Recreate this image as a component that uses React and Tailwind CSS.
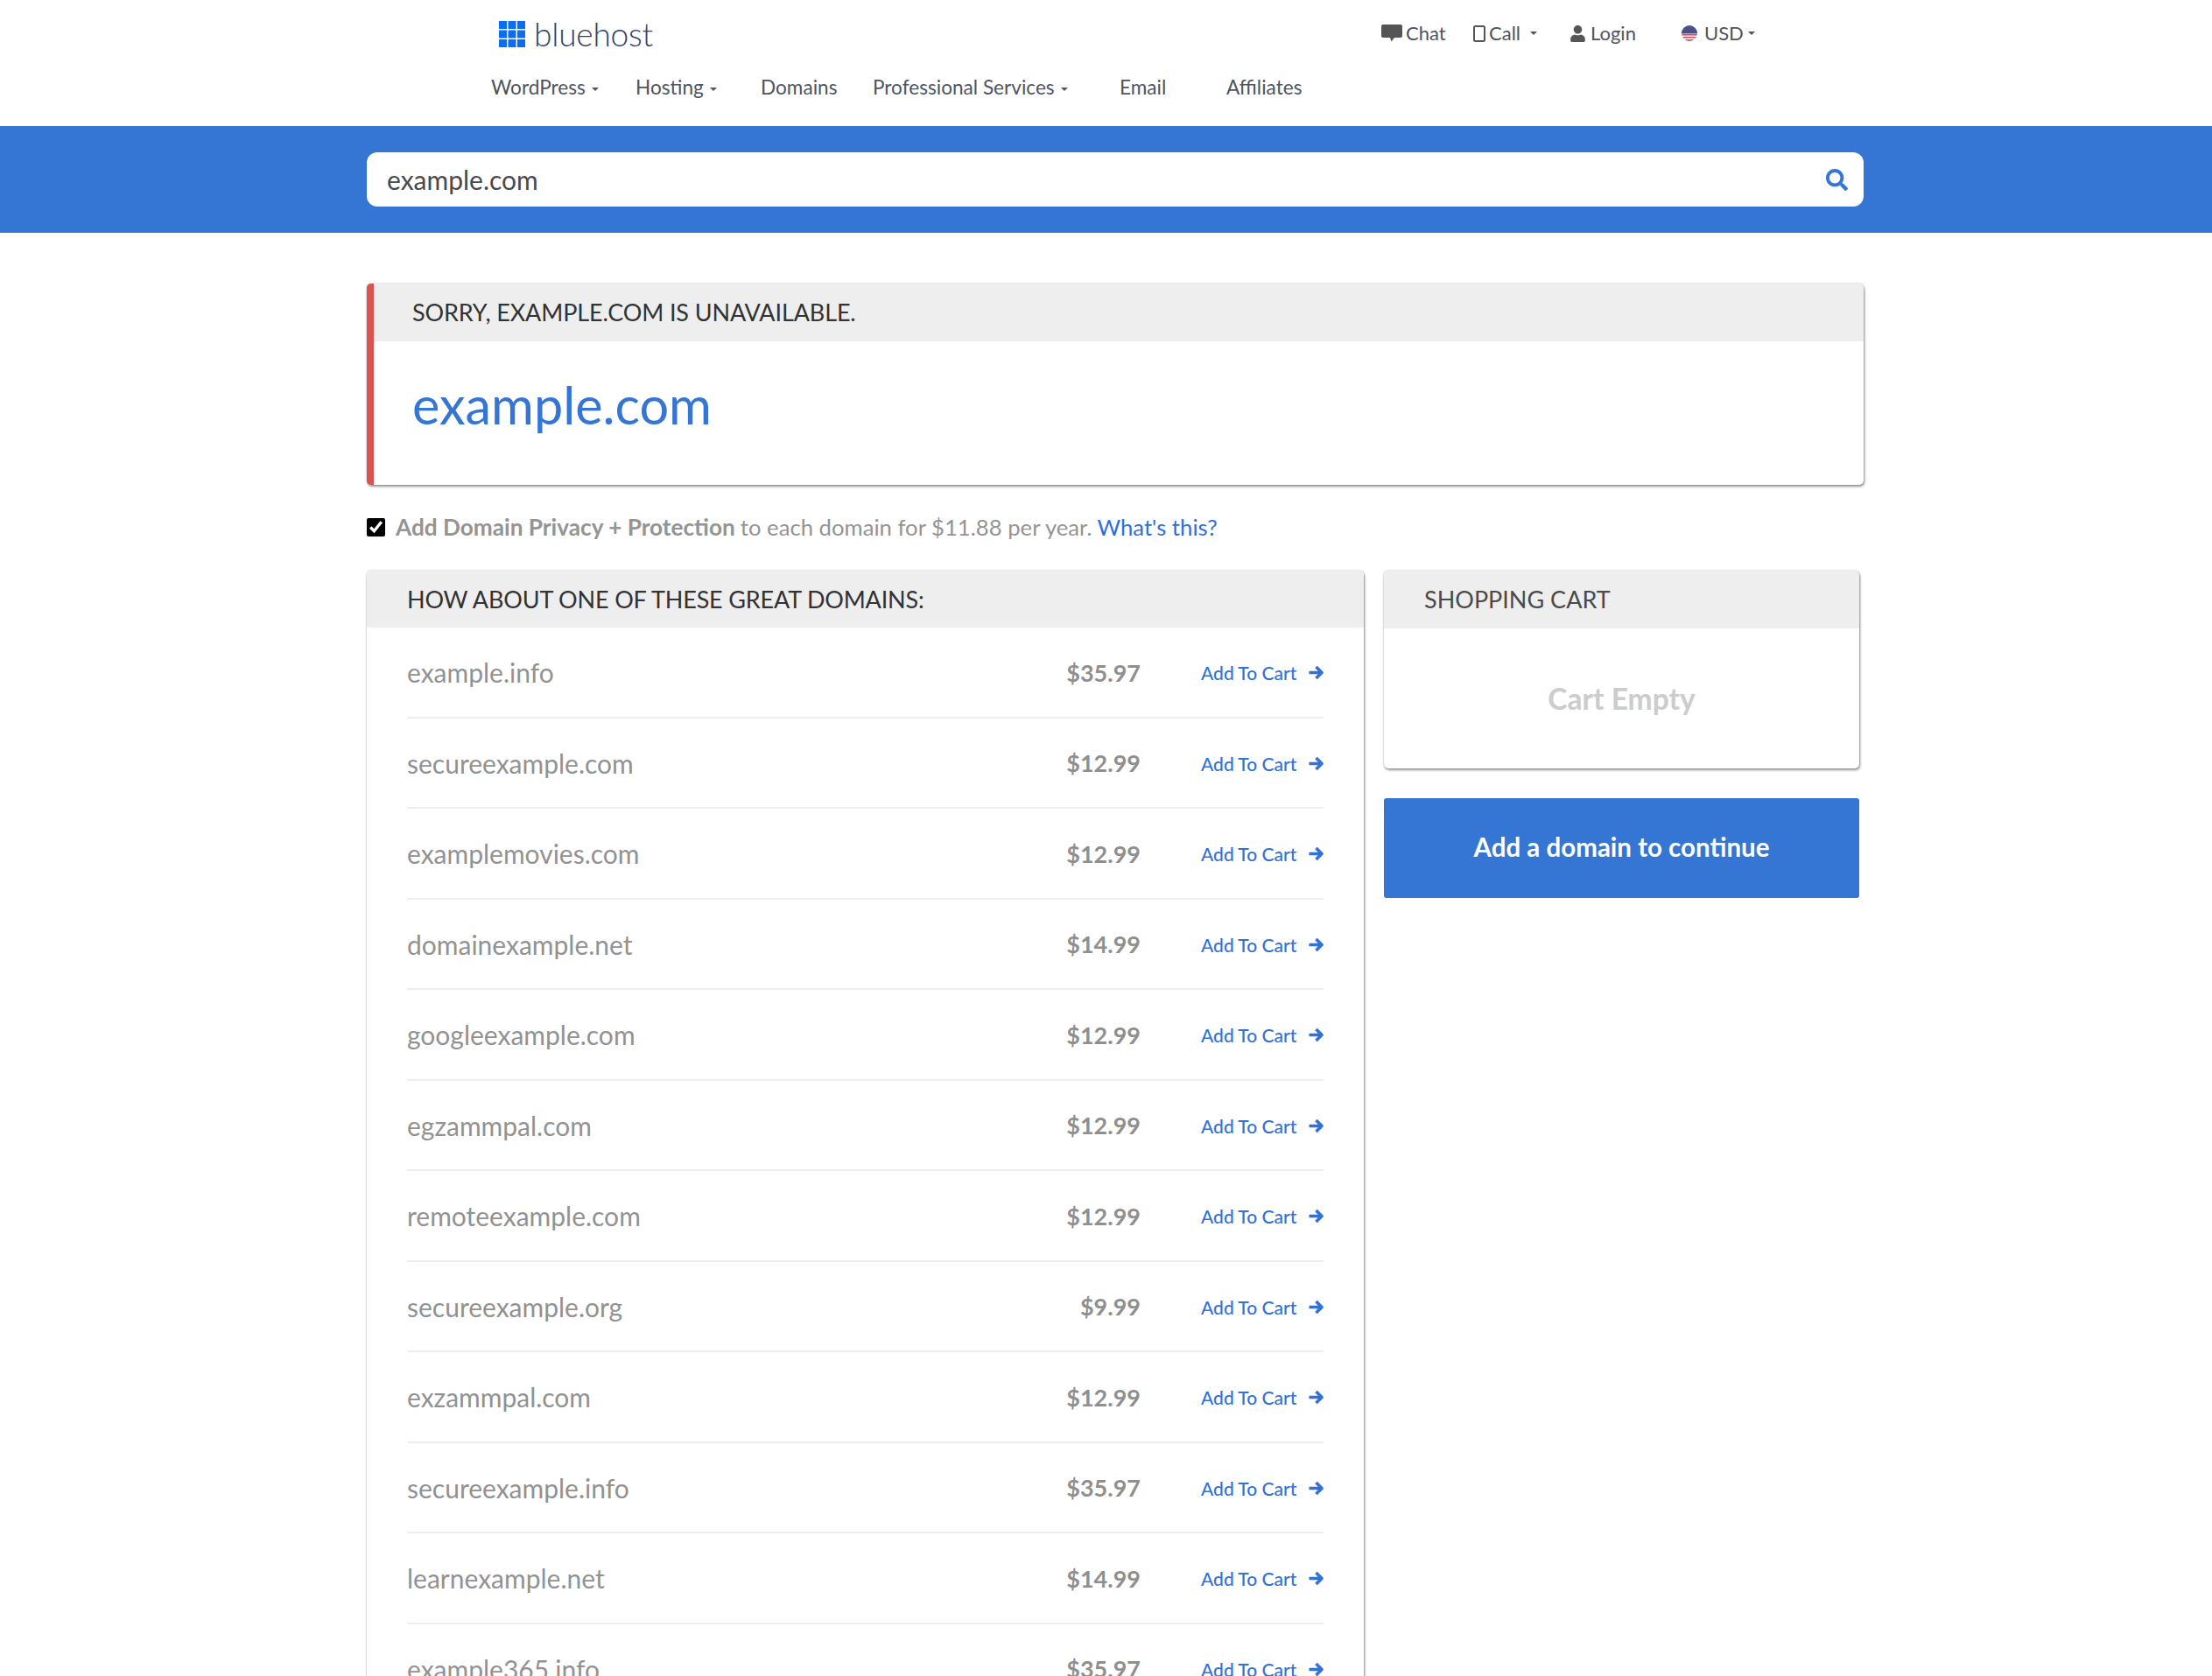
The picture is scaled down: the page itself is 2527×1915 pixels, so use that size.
import React from "react";
import { FaSearch, FaUser } from "react-icons/fa";

const rows = [
  ["example.info", "$35.97"],
  ["secureexample.com", "$12.99"],
  ["examplemovies.com", "$12.99"],
  ["domainexample.net", "$14.99"],
  ["googleexample.com", "$12.99"],
  ["egzammpal.com", "$12.99"],
  ["remoteexample.com", "$12.99"],
  ["secureexample.org", "$9.99"],
  ["exzammpal.com", "$12.99"],
  ["secureexample.info", "$35.97"],
  ["learnexample.net", "$14.99"],
  ["example365.info", "$35.97"],
];

function Caret({ gap = "ml-[7px]" }) {
  return <span className={`${gap} inline-block border-x-[4px] border-t-[4px] border-x-transparent border-t-[#555] align-middle`} />;
}

function Logo() {
  return (
    <svg width="30" height="30" viewBox="0 0 30 30" className="shrink-0">
      {[0, 1, 2].flatMap((r) =>
        [0, 1, 2].map((c) => <rect key={r + "-" + c} x={c * 10.5} y={r * 10.5} width="9" height="9" fill="#0a6ef5" />)
      )}
    </svg>
  );
}

function Flag() {
  return (
    <svg width="18" height="18" viewBox="0 0 18 18" className="shrink-0">
      <defs>
        <clipPath id="flagclip"><circle cx="9" cy="9" r="9" /></clipPath>
      </defs>
      <g clipPath="url(#flagclip)">
        <rect width="18" height="18" fill="#fff" />
        <rect y="10" width="18" height="1.6" fill="#d9505c" />
        <rect y="13" width="18" height="1.6" fill="#d9505c" />
        <rect y="16" width="18" height="2" fill="#d9505c" />
        <rect width="18" height="9.5" fill="#4b4f8a" />
      </g>
    </svg>
  );
}

function ChatIcon() {
  return (
    <svg width="24" height="20" viewBox="0 0 24 20" className="shrink-0">
      <path d="M2 0H22A2 2 0 0 1 24 2V13A2 2 0 0 1 22 15H15L11.5 19.5L10 15H2A2 2 0 0 1 0 13V2A2 2 0 0 1 2 0Z" fill="#555" />
    </svg>
  );
}

function PhoneIcon() {
  return (
    <svg width="14" height="19" viewBox="0 0 14 19" className="shrink-0">
      <rect x="1" y="1" width="12" height="17" rx="1.5" fill="#fff" stroke="#555" strokeWidth="2" />
    </svg>
  );
}

function Arrow() {
  return (
    <svg width="17" height="17" viewBox="0 0 17 17" className="shrink-0">
      <path d="M0.5 8.5H14M8.5 2L15 8.5L8.5 15" fill="none" stroke="#3272d6" strokeWidth="3.6" strokeLinejoin="round" />
    </svg>
  );
}

const shadow = "shadow-[1px_2px_3px_rgba(0,0,0,0.4),0_0_2px_rgba(0,0,0,0.3)]";

export default function App() {
  return (
    <div className="relative h-[1915px] overflow-hidden bg-white font-['Lato',sans-serif]">
      <header className="h-[144px] bg-white text-[#4d5560]">
        <div className="flex h-[78px] items-start">
          <div className="ml-[570px] mt-[24px] flex items-center gap-[10px]">
            <Logo />
            <span className="text-[37px] font-light leading-[30px] tracking-[-0.2px] text-[#2f4266]">bluehost</span>
          </div>
          <div className="ml-[832px] mt-[26px] flex items-center text-[22px] leading-[24px]">
            <span className="flex w-[105px] items-center gap-[4px]"><ChatIcon />Chat</span>
            <span className="flex w-[110px] items-center gap-[4px]"><PhoneIcon />Call<Caret /></span>
            <span className="flex w-[128px] items-center gap-[5px]"><FaUser className="text-[19px] text-[#555]" />Login</span>
            <span className="flex items-center gap-[8px]"><Flag />USD<Caret gap="-ml-[3px]" /></span>
          </div>
        </div>
        <nav className="relative flex h-[44px] items-center pl-[561px] text-[22.6px] leading-[24px]">
          <span className="w-[165px]">WordPress<Caret /></span>
          <span className="w-[143px]">Hosting<Caret /></span>
          <span className="w-[128px]">Domains</span>
          <span className="w-[282px]">Professional Services<Caret /></span>
          <span className="w-[122px]">Email</span>
          <span>Affiliates</span>
        </nav>
      </header>

      <div className="flex h-[122px] items-center bg-[#3575d3] pl-[419px]">
        <div className="flex h-[62px] w-[1710px] items-center justify-between rounded-[12px] bg-white pl-[23px] pr-[18px]">
          <span className="text-[30px] text-[#4a4a4a]">example.com</span>
          <FaSearch className="text-[25px] text-[#3575d3]" />
        </div>
      </div>

      <main className="ml-[419px] w-[1710px] pt-[58px]">
        <section className={`h-[230px] rounded-[5px] border-l-[8px] border-[#d9534f] bg-white ${shadow}`}>
          <div className="flex h-[66px] items-center rounded-tr-[5px] bg-[#eeeeee] pl-[44px] pt-[1px] text-[27px] tracking-[-0.12px] text-[#333]">SORRY, EXAMPLE.COM IS UNAVAILABLE.</div>
          <div className="pl-[44px] pt-[36px] text-[59.4px] leading-[72px] text-[#3575d3]">example.com</div>
        </section>

        <label className="mt-[36px] flex h-[24px] items-baseline text-[25.7px] leading-[24px] text-[#949494]">
          <input type="checkbox" defaultChecked className="mr-[12px] h-[21px] w-[21px] self-center accent-black" />
          <span className="text-[26.2px] font-bold">Add Domain Privacy + Protection</span>
          <span className="ml-[6px]">to each domain for $11.88 per year.</span>
          <span className="ml-[6px] text-[#2f6fd9]">What's this?</span>
        </label>

        <div className="mt-[38px] flex items-start">
          <section className={`w-[1139px] shrink-0 rounded-[5px] bg-white pb-[40px] ${shadow}`}>
            <div className="flex h-[65px] items-center rounded-t-[5px] bg-[#eeeeee] pl-[46px] pt-[2px] text-[27px] tracking-[-0.17px] text-[#333]">HOW ABOUT ONE OF THESE GREAT DOMAINS:</div>
            <ul className="px-[46px]">
              {rows.map(([name, price]) => (
                <li key={name} className="flex h-[103.5px] items-center border-b-[2px] border-[#eeeeee] pt-[2px]">
                  <span className="flex-1 text-[30px] text-[#929292]">{name}</span>
                  <span className="w-[110px] text-right text-[27px] font-bold text-[#8f8f8f]">{price}</span>
                  <span className="ml-[69px] flex w-[140px] items-center justify-between text-[21px] font-medium text-[#3272d6]">
                    Add To Cart
                    <Arrow />
                  </span>
                </li>
              ))}
            </ul>
          </section>

          <aside className="ml-[23px] w-[543px] shrink-0">
            <section className={`h-[226px] rounded-[5px] bg-white ${shadow}`}>
              <div className="flex h-[66px] items-center rounded-t-[5px] border-b-[2px] border-[#eeeeee] bg-[#eeeeee] pl-[46px] pt-[2px] text-[27px] text-[#4a4a4a]">SHOPPING CART</div>
              <div className="flex h-[160px] items-center justify-center text-[33.6px] font-bold text-[#cccccc]">Cart Empty</div>
            </section>
            <button className="mt-[34px] flex h-[114px] w-full items-center justify-center rounded-[3px] bg-[#3575d3] pb-[1px] text-[29.5px] font-bold text-white">
              Add a domain to continue
            </button>
          </aside>
        </div>
      </main>
    </div>
  );
}
